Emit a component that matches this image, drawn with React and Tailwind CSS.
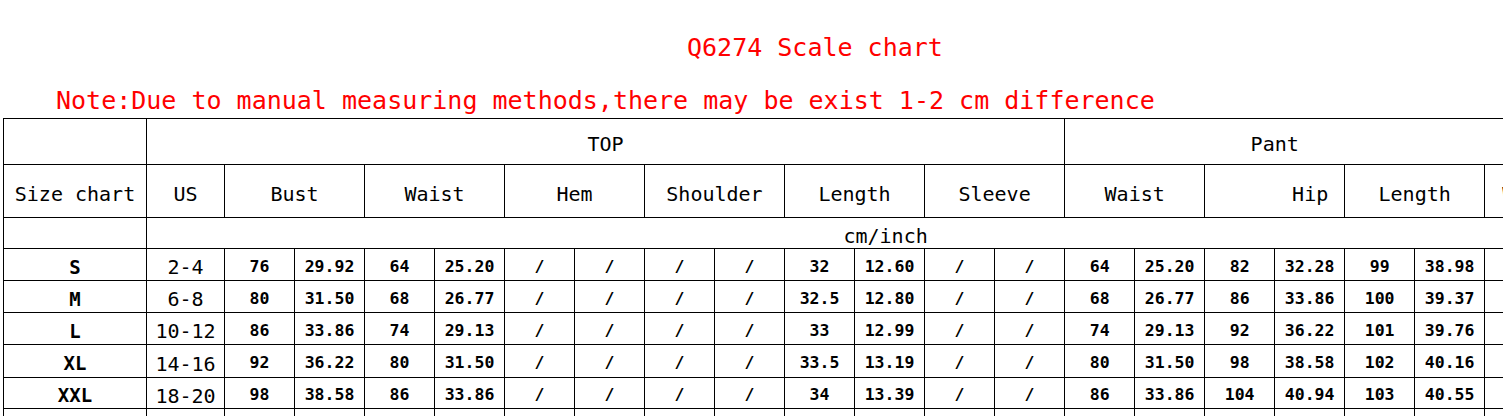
import React from "react";

const rows = [
  ["S", "2-4", "76", "29.92", "64", "25.20", "/", "/", "/", "/", "32", "12.60", "/", "/", "64", "25.20", "82", "32.28", "99", "38.98"],
  ["M", "6-8", "80", "31.50", "68", "26.77", "/", "/", "/", "/", "32.5", "12.80", "/", "/", "68", "26.77", "86", "33.86", "100", "39.37"],
  ["L", "10-12", "86", "33.86", "74", "29.13", "/", "/", "/", "/", "33", "12.99", "/", "/", "74", "29.13", "92", "36.22", "101", "39.76"],
  ["XL", "14-16", "92", "36.22", "80", "31.50", "/", "/", "/", "/", "33.5", "13.19", "/", "/", "80", "31.50", "98", "38.58", "102", "40.16"],
  ["XXL", "18-20", "98", "38.58", "86", "33.86", "/", "/", "/", "/", "34", "13.39", "/", "/", "86", "33.86", "104", "40.94", "103", "40.55"],
];

const rowHeights = ["h-[32px]", "h-[32px]", "h-[32px]", "h-[33px]", "h-[31px]"];

const headers = ["Bust", "Waist", "Hem", "Shoulder", "Length", "Sleeve", "Waist"];

const cell = "border border-black p-0 pt-[5px] text-center align-middle leading-none whitespace-nowrap";

export default function App() {
  return (
    <div className="w-[1503px] h-[416px] overflow-hidden bg-white text-black font-['DejaVu_Sans_Mono',monospace]">
      {/* Title */}
      <div className="pt-[35px] pl-[687px] text-[25px] leading-[25px] text-[#ff0000] whitespace-pre">
        Q6274 Scale chart
      </div>
      <div className="mt-[28px] pl-[56px] text-[25px] leading-[25px] text-[#ff0000] whitespace-pre">
        Note:Due to manual measuring methods,there may be exist 1-2 cm difference
      </div>

      {/* Table */}
      <div className="mt-[5px] pl-[3px]">
        <table className="table-fixed border-collapse w-[1622px]">
          <colgroup>
            <col className="w-[143px]" />
            <col className="w-[78px]" />
            {Array.from({ length: 20 }).map((_, i) => (
              <col key={i} className="w-[70px]" />
            ))}
          </colgroup>
          <tbody>
            <tr className="h-[46px] text-[20px]">
              <td className={cell}></td>
              <td className={cell} colSpan={13}>TOP</td>
              <td className={`${cell} pr-[140px]`} colSpan={8}>Pant</td>
            </tr>
            <tr className="h-[53px] text-[20px]">
              <td className={cell}>Size chart</td>
              <td className={cell}>US</td>
              {headers.map((h, i) => (
                <td key={i} className={cell} colSpan={2}>{h}</td>
              ))}
              <td className={`${cell} pl-[71px]`} colSpan={2}>Hip</td>
              <td className={cell} colSpan={2}>Length</td>
              <td className={`${cell} text-left pl-[17px]`} colSpan={2}>Waist</td>
            </tr>
            <tr className="h-[31px] text-[20px]">
              <td className={cell}></td>
              <td className={cell} colSpan={21}>cm/inch</td>
            </tr>
            {rows.map((r, ri) => (
              <tr key={ri} className={rowHeights[ri]}>
                <td className={`${cell} text-[19px] font-bold`}>{r[0]}</td>
                <td className={`${cell} text-[20px]`}>{r[1]}</td>
                {r.slice(2).map((v, i) => (
                  <td key={i} className={`${cell} text-[16.5px] font-bold`}>{v}</td>
                ))}
                <td className={cell}></td>
                <td className={cell}></td>
              </tr>
            ))}
            <tr className="h-[32px]">
              {Array.from({ length: 22 }).map((_, i) => (
                <td key={i} className={cell}></td>
              ))}
            </tr>
          </tbody>
        </table>
      </div>
    </div>
  );
}
